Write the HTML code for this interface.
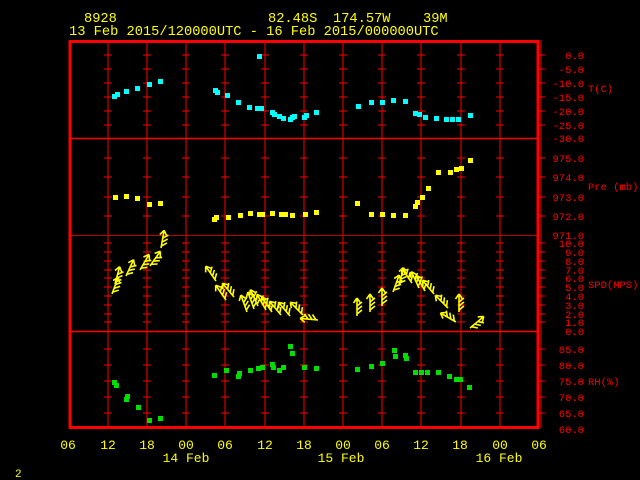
<!DOCTYPE html>
<html><head><meta charset="utf-8"><style>
html,body{margin:0;padding:0;background:#000;width:640px;height:480px;overflow:hidden}
svg{display:block}
text{font-family:"Liberation Mono",monospace}
</style></head><body>
<svg width="640" height="480" viewBox="0 0 640 480" xmlns="http://www.w3.org/2000/svg">
<defs>
<g id="col" stroke="#f00" stroke-width="1" fill="none">
<path d="M0,40V428"/>
<path d="M-4,55h8M-4,69h8M-4,83h8M-4,97h8M-4,111h8M-4,125h8M-4,158h8M-4,177h8M-4,197h8M-4,216h8M-4,243h8M-4,252h8M-4,261h8M-4,270h8M-4,278h8M-4,287h8M-4,296h8M-4,305h8M-4,314h8M-4,322h8M-4,349h8M-4,365h8M-4,381h8M-4,397h8M-4,413h8"/>
</g>
<g id="ar" stroke="#ff0" stroke-width="1.6" fill="none">
<path d="M0,0V-18M0,-18L-3.5,-13M0,-18L3.5,-13M0,-2L5,-6M0,-6L5,-10M0,-10L5,-14"/>
</g>
</defs>
<rect width="640" height="480" fill="#000"/>
<!-- header -->
<g fill="#ff0" font-size="13.7">
<text x="84" y="22">8928</text>
<text x="268" y="22">82.48S</text>
<text x="333" y="22">174.57W</text>
<text x="423" y="22">39M</text>
<text x="69" y="35">13 Feb 2015/120000UTC - 16 Feb 2015/000000UTC</text>
</g>
<!-- columns -->
<use href="#col" x="108"/><use href="#col" x="147"/><use href="#col" x="186"/><use href="#col" x="225"/>
<use href="#col" x="265"/><use href="#col" x="304"/><use href="#col" x="343"/><use href="#col" x="382"/>
<use href="#col" x="421"/><use href="#col" x="461"/><use href="#col" x="500"/>
<use href="#col" x="541"/>
<!-- dividers -->
<path d="M70,138.5H538M70,331.5H538" stroke="#f00" stroke-width="1.5"/>
<path d="M70,235.5H538" stroke="#b00" stroke-width="1"/>
<!-- frame -->
<rect x="70" y="41.5" width="468" height="386" fill="none" stroke="#f00" stroke-width="3"/>
<!-- right labels -->
<g fill="#f00" font-size="10.5" text-anchor="end">
<text x="584" y="59">0.0</text><text x="584" y="73">-5.0</text><text x="584" y="87">-10.0</text><text x="584" y="101">-15.0</text><text x="584" y="115">-20.0</text><text x="584" y="129">-25.0</text><text x="584" y="142">-30.0</text>
<text x="584" y="162">975.0</text><text x="584" y="181">974.0</text><text x="584" y="201">973.0</text><text x="584" y="220">972.0</text><text x="584" y="239">971.0</text>
<text x="584" y="247">10.0</text><text x="584" y="256">9.0</text><text x="584" y="265">8.0</text><text x="584" y="274">7.0</text><text x="584" y="282">6.0</text><text x="584" y="291">5.0</text><text x="584" y="300">4.0</text><text x="584" y="309">3.0</text><text x="584" y="318">2.0</text><text x="584" y="326">1.0</text><text x="584" y="335">0.0</text>
<text x="584" y="353">85.0</text><text x="584" y="369">80.0</text><text x="584" y="385">75.0</text><text x="584" y="401">70.0</text><text x="584" y="417">65.0</text><text x="584" y="433">60.0</text>
</g>
<g fill="#f00" font-size="10.5">
<text x="588" y="92">T(C)</text><text x="588" y="190">Pre (mb)</text><text x="588" y="288">SPD(MPS)</text><text x="588" y="385">RH(%)</text>
</g>
<!-- bottom labels -->
<g fill="#ff0" font-size="13" text-anchor="middle">
<text x="68" y="449">06</text><text x="108" y="449">12</text><text x="147" y="449">18</text><text x="186" y="449">00</text><text x="225" y="449">06</text><text x="265" y="449">12</text><text x="304" y="449">18</text><text x="343" y="449">00</text><text x="382" y="449">06</text><text x="421" y="449">12</text><text x="460" y="449">18</text><text x="500" y="449">00</text><text x="539" y="449">06</text>
<text x="186" y="462">14 Feb</text><text x="341" y="462">15 Feb</text><text x="499" y="462">16 Feb</text>
</g>
<text x="15" y="477" fill="#ff0" font-size="11">2</text>
<!-- T points -->
<g fill="#0ff">
<rect x="112" y="94" width="5" height="5"/><rect x="115" y="92" width="5" height="5"/><rect x="124" y="89" width="5" height="5"/><rect x="135" y="86" width="5" height="5"/><rect x="147" y="82" width="5" height="5"/><rect x="158" y="79" width="5" height="5"/>
<rect x="257" y="54" width="5" height="5"/><rect x="213" y="88" width="5" height="5"/><rect x="215" y="90" width="5" height="5"/><rect x="225" y="93" width="5" height="5"/><rect x="236" y="100" width="5" height="5"/><rect x="247" y="105" width="5" height="5"/><rect x="255" y="106" width="5" height="5"/><rect x="259" y="106" width="5" height="5"/><rect x="270" y="110" width="5" height="5"/><rect x="272" y="112" width="5" height="5"/><rect x="277" y="114" width="5" height="5"/><rect x="281" y="116" width="5" height="5"/><rect x="288" y="117" width="5" height="5"/><rect x="290" y="115" width="5" height="5"/><rect x="292" y="114" width="5" height="5"/><rect x="302" y="115" width="5" height="5"/><rect x="304" y="113" width="5" height="5"/><rect x="314" y="110" width="5" height="5"/>
<rect x="356" y="104" width="5" height="5"/><rect x="369" y="100" width="5" height="5"/><rect x="380" y="100" width="5" height="5"/><rect x="391" y="98" width="5" height="5"/><rect x="403" y="99" width="5" height="5"/><rect x="413" y="111" width="5" height="5"/><rect x="417" y="112" width="5" height="5"/><rect x="423" y="115" width="5" height="5"/><rect x="434" y="116" width="5" height="5"/><rect x="444" y="117" width="5" height="5"/><rect x="450" y="117" width="5" height="5"/><rect x="456" y="117" width="5" height="5"/><rect x="468" y="113" width="5" height="5"/>
</g>
<!-- Pre points -->
<g fill="#ff0">
<rect x="113" y="195" width="5" height="5"/><rect x="124" y="194" width="5" height="5"/><rect x="135" y="196" width="5" height="5"/><rect x="147" y="202" width="5" height="5"/><rect x="158" y="201" width="5" height="5"/>
<rect x="212" y="217" width="5" height="5"/><rect x="214" y="215" width="5" height="5"/><rect x="226" y="215" width="5" height="5"/><rect x="238" y="213" width="5" height="5"/><rect x="248" y="211" width="5" height="5"/><rect x="257" y="212" width="5" height="5"/><rect x="260" y="212" width="5" height="5"/><rect x="270" y="211" width="5" height="5"/><rect x="279" y="212" width="5" height="5"/><rect x="283" y="212" width="5" height="5"/><rect x="290" y="213" width="5" height="5"/><rect x="303" y="212" width="5" height="5"/><rect x="314" y="210" width="5" height="5"/>
<rect x="355" y="201" width="5" height="5"/><rect x="369" y="212" width="5" height="5"/><rect x="380" y="212" width="5" height="5"/><rect x="391" y="213" width="5" height="5"/><rect x="403" y="213" width="5" height="5"/><rect x="413" y="204" width="5" height="5"/><rect x="415" y="200" width="5" height="5"/><rect x="420" y="195" width="5" height="5"/><rect x="426" y="186" width="5" height="5"/><rect x="436" y="170" width="5" height="5"/><rect x="448" y="170" width="5" height="5"/><rect x="454" y="167" width="5" height="5"/><rect x="459" y="166" width="5" height="5"/><rect x="468" y="158" width="5" height="5"/>
</g>
<!-- RH points -->
<g fill="#0d0">
<rect x="112" y="380" width="5" height="5"/><rect x="114" y="383" width="5" height="5"/><rect x="124" y="397" width="5" height="5"/><rect x="125" y="394" width="5" height="5"/><rect x="136" y="405" width="5" height="5"/><rect x="147" y="418" width="5" height="5"/><rect x="158" y="416" width="5" height="5"/>
<rect x="212" y="373" width="5" height="5"/><rect x="224" y="368" width="5" height="5"/><rect x="236" y="374" width="5" height="5"/><rect x="237" y="371" width="5" height="5"/><rect x="248" y="368" width="5" height="5"/><rect x="256" y="366" width="5" height="5"/><rect x="260" y="365" width="5" height="5"/><rect x="270" y="362" width="5" height="5"/><rect x="271" y="365" width="5" height="5"/><rect x="277" y="368" width="5" height="5"/><rect x="281" y="365" width="5" height="5"/><rect x="288" y="344" width="5" height="5"/><rect x="290" y="351" width="5" height="5"/><rect x="302" y="365" width="5" height="5"/><rect x="314" y="366" width="5" height="5"/>
<rect x="355" y="367" width="5" height="5"/><rect x="369" y="364" width="5" height="5"/><rect x="380" y="361" width="5" height="5"/><rect x="392" y="348" width="5" height="5"/><rect x="393" y="354" width="5" height="5"/><rect x="403" y="353" width="5" height="5"/><rect x="404" y="356" width="5" height="5"/><rect x="413" y="370" width="5" height="5"/><rect x="419" y="370" width="5" height="5"/><rect x="425" y="370" width="5" height="5"/><rect x="436" y="370" width="5" height="5"/><rect x="447" y="374" width="5" height="5"/><rect x="454" y="377" width="5" height="5"/><rect x="458" y="377" width="5" height="5"/><rect x="467" y="385" width="5" height="5"/>
</g>
<!-- wind arrows -->
<g>
<use href="#ar" transform="translate(112,294) rotate(20)"/>
<use href="#ar" transform="translate(115,284) rotate(15)"/>
<use href="#ar" transform="translate(126,276) rotate(25)"/>
<use href="#ar" transform="translate(140,270) rotate(30)"/>
<use href="#ar" transform="translate(150,266) rotate(35)"/>
<use href="#ar" transform="translate(161,248) rotate(10)"/>
<use href="#ar" transform="translate(216,281) rotate(-35)"/>
<use href="#ar" transform="translate(226,300) rotate(-35)"/>
<use href="#ar" transform="translate(234,297) rotate(-40)"/>
<use href="#ar" transform="translate(247,312) rotate(-20)"/>
<use href="#ar" transform="translate(254,309) rotate(-20)"/>
<use href="#ar" transform="translate(258,306) rotate(-25)"/>
<use href="#ar" transform="translate(266,310) rotate(-30)"/>
<use href="#ar" transform="translate(272,312) rotate(-35)"/>
<use href="#ar" transform="translate(281,315) rotate(-40)"/>
<use href="#ar" transform="translate(290,316) rotate(-40)"/>
<use href="#ar" transform="translate(303,315) rotate(-45)"/>
<use href="#ar" transform="translate(318,320) rotate(-85)"/>
<use href="#ar" transform="translate(357,316) rotate(0)"/>
<use href="#ar" transform="translate(370,312) rotate(0)"/>
<use href="#ar" transform="translate(382,306) rotate(0)"/>
<use href="#ar" transform="translate(393,292) rotate(20)"/>
<use href="#ar" transform="translate(399,285) rotate(15)"/>
<use href="#ar" transform="translate(412,283) rotate(-35)"/>
<use href="#ar" transform="translate(419,288) rotate(-25)"/>
<use href="#ar" transform="translate(425,291) rotate(-30)"/>
<use href="#ar" transform="translate(434,294) rotate(-40)"/>
<use href="#ar" transform="translate(448,308) rotate(-45)"/>
<use href="#ar" transform="translate(456,322) rotate(-60)"/>
<use href="#ar" transform="translate(459,312) rotate(0)"/>
<use href="#ar" transform="translate(470,328) rotate(50)"/>
</g>
</svg>
</body></html>
